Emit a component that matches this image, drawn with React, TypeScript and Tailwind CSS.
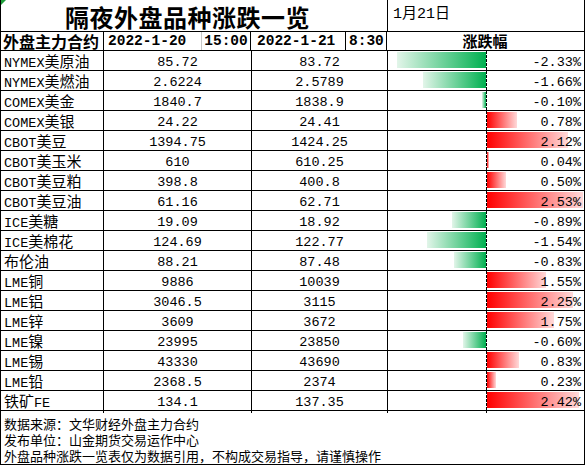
import React from "react";

const rows: [string, string, string, number][] = [
  ["NYMEX美原油", "85.72", "83.72", -2.33],
  ["NYMEX美燃油", "2.6224", "2.5789", -1.66],
  ["COMEX美金", "1840.7", "1838.9", -0.1],
  ["COMEX美银", "24.22", "24.41", 0.78],
  ["CBOT美豆", "1394.75", "1424.25", 2.12],
  ["CBOT美玉米", "610", "610.25", 0.04],
  ["CBOT美豆粕", "398.8", "400.8", 0.5],
  ["CBOT美豆油", "61.16", "62.71", 2.53],
  ["ICE美糖", "19.09", "18.92", -0.89],
  ["ICE美棉花", "124.69", "122.77", -1.54],
  ["布伦油", "88.21", "87.48", -0.83],
  ["LME铜", "9886", "10039", 1.55],
  ["LME铝", "3046.5", "3115", 2.25],
  ["LME锌", "3609", "3672", 1.75],
  ["LME镍", "23995", "23850", -0.6],
  ["LME锡", "43330", "43690", 0.83],
  ["LME铅", "2368.5", "2374", 0.23],
  ["铁矿FE", "134.1", "137.35", 2.42],
];

const mono = "font-['Liberation_Mono','Noto_Sans_CJK_SC',monospace]";
const cjk = "font-['Noto_Sans_CJK_SC','Liberation_Sans',sans-serif]";

function Name({ text }: { text: string }) {
  const parts = text.match(/[A-Za-z]+|[^A-Za-z]+/g) || [];
  return (
    <span className="leading-[18px]">
      {parts.map((p, i) =>
        /[A-Za-z]/.test(p) ? (
          <span key={i} className="text-[13.5px]">{p}</span>
        ) : (
          <span key={i} className={`${cjk} text-[15px]`}>{p}</span>
        )
      )}
    </span>
  );
}

function Row({ r }: { r: [string, string, string, number] }) {
  const [name, a, b, pct] = r;
  const w = Math.abs(pct) * 38;
  return (
    <div className={`grid grid-cols-[103px_148px_136px_196px] h-[20px] border-b border-black ${mono} text-[13.5px] leading-[18px] text-black`}>
      <div className="border-r border-black pl-[3px] flex items-center pt-[1px] whitespace-nowrap">
        <Name text={name} />
      </div>
      <div className="border-r border-black flex items-center justify-center pt-[2px]">{a}</div>
      <div className="border-r border-black flex items-center justify-center pt-[2px]">{b}</div>
      <div className="relative flex h-full">
        <div className="w-[98px] flex justify-end pt-[1px]">
          {pct < 0 && (
            <div
              className="h-[16px] bg-[linear-gradient(to_right,#e2f5e9,#00b050)]"
              style={{ width: w }}
            />
          )}
        </div>
        <div className="w-[1px] h-full bg-[repeating-linear-gradient(to_bottom,#000_0_3px,transparent_3px_4px)]" />
        <div className="flex-1 flex justify-start pt-[1px]">
          {pct > 0 && (
            <div
              className="h-[16px] bg-[linear-gradient(to_right,#ff0000,#ffd9d9)]"
              style={{ width: Math.max(w, 2) }}
            />
          )}
        </div>
        <div className="absolute inset-0 flex items-center justify-end pr-[3px] pt-[2px]">
          {pct.toFixed(2)}%
        </div>
      </div>
    </div>
  );
}

export default function App() {
  return (
    <div className="w-[585px] h-[465px] bg-white border-x border-b border-black overflow-hidden relative">
      <div className="absolute left-0 top-0 w-0 h-0 border-t-[5px] border-r-[5px] border-t-[#1e9e3a] border-r-transparent" />
      {/* Title row */}
      <div className="grid grid-cols-[387px_196px] h-[32px] border-b border-black">
        <div className={`border-r border-black flex items-center pl-[64px] pt-[2px] ${cjk} text-[24px] leading-[28px] font-semibold tracking-[0.5px] text-black`}>
          隔夜外盘品种涨跌一览
        </div>
        <div className={`flex items-center pl-[5px] ${mono} text-[15px] text-black`}>
          1月21日
        </div>
      </div>
      {/* Header row */}
      <div className={`grid grid-cols-[103px_98px_49px_95px_41px_196px] h-[19px] border-b border-black ${mono} font-bold text-black leading-[18px]`}>
        <div className={`border-r border-black pl-[2px] flex items-center ${cjk} text-[16px] leading-[18px] font-bold whitespace-nowrap`}>
          外盘主力合约
        </div>
        <div className="border-r border-[#c8c8c8] flex items-center pl-[4px] text-[14.5px]">2022-1-20</div>
        <div className="border-r border-black flex items-center justify-center text-[14.5px]">15:00</div>
        <div className="border-r border-black flex items-center pl-[6px] text-[14.5px]">2022-1-21</div>
        <div className="border-r border-black flex items-center pl-[3px] text-[14.5px]">8:30</div>
        <div className={`flex items-center justify-center ${cjk} text-[15px] leading-[18px] font-bold`}>涨跌幅</div>
      </div>
      {rows.map((r, i) => (
        <Row key={i} r={r} />
      ))}
      <div className={`pl-[3px] pt-[5px] ${cjk} text-[13px] leading-[16px] text-black`}>
        <div>数据来源：文华财经外盘主力合约</div>
        <div>发布单位：山金期货交易运作中心</div>
        <div>外盘品种涨跌一览表仅为数据引用，不构成交易指导，请谨慎操作</div>
      </div>
    </div>
  );
}
